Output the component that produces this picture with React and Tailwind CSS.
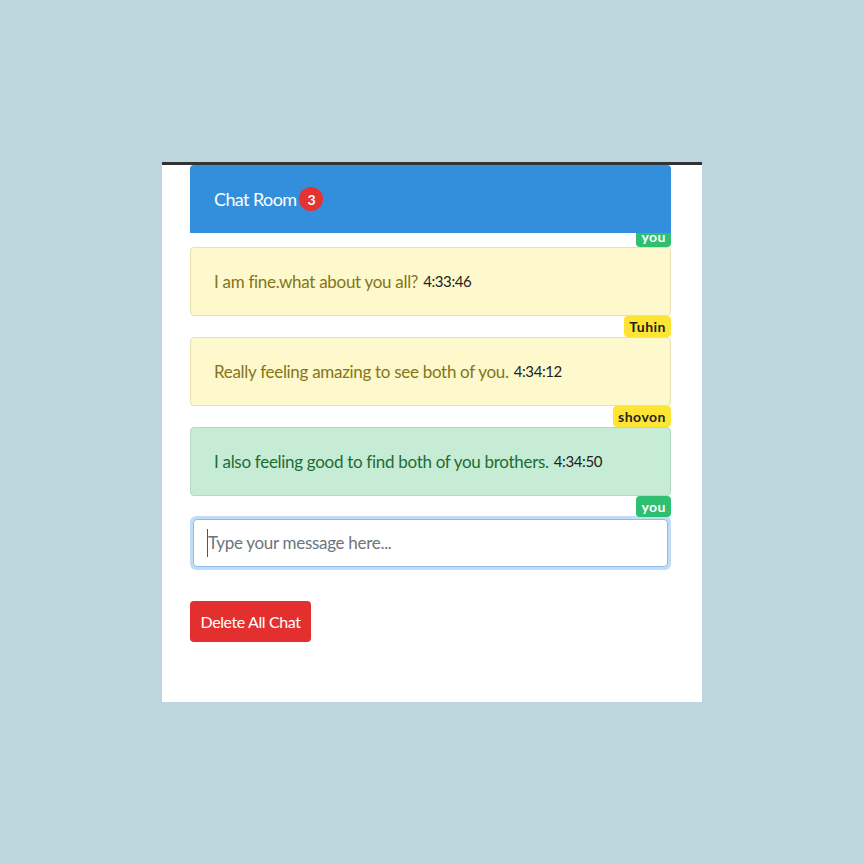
import React from 'react';

const messages = [
  { text: 'I am fine.what about you all?', time: '4:33:46', tone: 'yellow', by: 'Tuhin' },
  { text: 'Really feeling amazing to see both of you.', time: '4:34:12', tone: 'yellow', by: 'shovon' },
  { text: 'I also feeling good to find both of you brothers.', time: '4:34:50', tone: 'green', by: 'you' },
];

const Tag = ({ name }) => (
  <div className="flex justify-end">
    <span
      className={`px-[5px] h-[21px] leading-[21px] rounded-[4px] text-[14px] font-bold tracking-[0.5px] ${
        name === 'you' ? 'bg-[#2fbf71] text-white' : 'bg-[#ffe533] text-[#222]'
      }`}
    >
      {name}
    </span>
  </div>
);

const App = () => {
  return (
    <div className="h-screen w-full bg-[#bdd5dc] flex items-center justify-center" style={{ fontFamily: 'Lato, "Noto Sans", sans-serif' }}>
      <div className="w-[540px] h-[540px] bg-white border-t-[3px] border-[#333] px-[28px] pr-[31px]">
        <div className="relative z-10 h-[68px] bg-[#338fdc] rounded-t-[4px] flex items-center pl-[24px] gap-[3px] text-white">
          <span className="text-[18px] tracking-[-0.6px]">Chat Room</span>
          <span className="w-[24px] h-[24px] rounded-full bg-[#e53232] flex items-center justify-center text-[14px] font-bold">3</span>
        </div>
        <div className="-mt-[7px]">
          <Tag name="you" />
        </div>
        {messages.map((m) => (
          <div key={m.time}>
            <div
              className={`h-[69px] rounded-[4px] border flex items-center pl-[23px] ${
                m.tone === 'green'
                  ? 'bg-[#c6ecd6] border-[#b2dcc2] text-[#1e6b37]'
                  : 'bg-[#fef9cc] border-[#e6e0b2] text-[#857418]'
              }`}
            >
              <span className="text-[17px] tracking-[-0.3px]">{m.text}</span>
              <span className="text-[15px] tracking-[-0.4px] text-[#222] ml-[5px]">{m.time}</span>
            </div>
            <Tag name={m.by} />
          </div>
        ))}
        <div className="-mt-px rounded-[6px] bg-[#c3dcf5] p-[3px]">
          <div className="h-[48px] rounded-[4px] bg-white border border-[#8cbdf0] flex items-center pl-[13px]">
            <span className="w-px h-[28px] bg-[#555]" />
            <span className="text-[17px] tracking-[-0.3px] text-[#6c757d]">Type your message here...</span>
          </div>
        </div>
        <button className="mt-[31px] w-[121px] h-[41px] rounded-[4px] bg-[#e3302f] text-white text-[16px] tracking-[-0.4px]">
          Delete All Chat
        </button>
      </div>
    </div>
  );
};

export default App;
